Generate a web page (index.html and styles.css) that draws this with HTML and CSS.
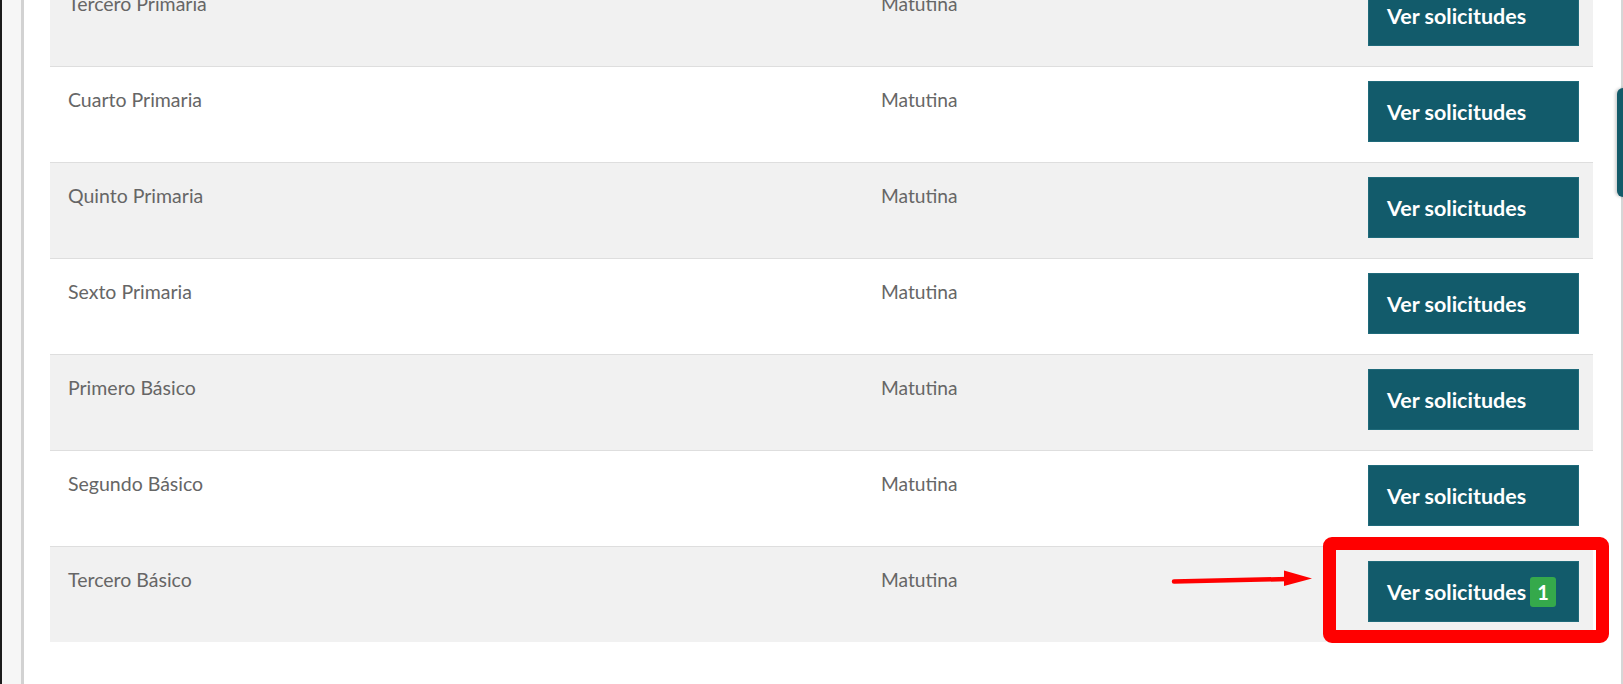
FILE: index.html
```html
<!DOCTYPE html>
<html lang="es">
<head>
<meta charset="utf-8">
<title>Solicitudes por grado</title>
<link rel="stylesheet" href="styles.css">
</head>
<body>
<div class="window">
  <div class="edge"></div>
  <div class="gutter"></div>
  <main class="main">
    <div class="table">
      <div class="row alt">
        <div class="cell grade">Tercero Primaria</div>
        <div class="cell shift">Matutina</div>
        <div class="cell action"><button class="btn">Ver solicitudes</button></div>
      </div>
      <div class="row">
        <div class="cell grade">Cuarto Primaria</div>
        <div class="cell shift">Matutina</div>
        <div class="cell action"><button class="btn">Ver solicitudes</button></div>
      </div>
      <div class="row alt">
        <div class="cell grade">Quinto Primaria</div>
        <div class="cell shift">Matutina</div>
        <div class="cell action"><button class="btn">Ver solicitudes</button></div>
      </div>
      <div class="row">
        <div class="cell grade">Sexto Primaria</div>
        <div class="cell shift">Matutina</div>
        <div class="cell action"><button class="btn">Ver solicitudes</button></div>
      </div>
      <div class="row alt">
        <div class="cell grade">Primero Básico</div>
        <div class="cell shift">Matutina</div>
        <div class="cell action"><button class="btn">Ver solicitudes</button></div>
      </div>
      <div class="row">
        <div class="cell grade">Segundo Básico</div>
        <div class="cell shift">Matutina</div>
        <div class="cell action"><button class="btn">Ver solicitudes</button></div>
      </div>
      <div class="row alt">
        <div class="cell grade">Tercero Básico</div>
        <div class="cell shift">Matutina</div>
        <div class="cell action"><button class="btn">Ver solicitudes <span class="badge">1</span></button></div>
      </div>
    </div>
  </main>
</div>
<div class="side-tab"></div>
<div class="highlight"></div>
<svg class="arrow" width="150" height="24" viewBox="0 0 150 24" aria-hidden="true">
  <line x1="6" y1="14.5" x2="120" y2="12" stroke="#ff0000" stroke-width="4.5" stroke-linecap="round"/>
  <polygon points="116,3.5 144,11.5 116,19" fill="#ff0000"/>
</svg>
</body>
</html>
```
FILE: styles.css
```css
html, body {
  margin: 0;
  padding: 0;
  height: 684px;
  overflow: hidden;
  background: #ffffff;
}
body {
  position: relative;
  font-family: Lato, "Open Sans", "Liberation Sans", sans-serif;
}
.window {
  display: flex;
  height: 684px;
}
.edge {
  width: 2px;
  background: #1c1c1c;
  flex: none;
}
.gutter {
  width: 19px;
  flex: none;
  background: #f6f6f6;
  border-right: 3px solid #d2d2d2;
}
.main {
  flex: 1;
  padding: 0 28px 0 26px;
  border-right: 2px solid #d6d6d6;
  background: #ffffff;
  overflow: hidden;
}
.table {
  margin-top: -30px;
}
.row {
  display: grid;
  grid-template-columns: 813px 1fr auto;
  height: 95px;
  border-top: 1px solid #dedede;
  background: #ffffff;
}
.row.alt {
  background: #f1f1f1;
}
.cell {
  font-size: 19.5px;
  line-height: 26px;
  color: #666666;
}
.grade {
  padding: 20px 18px 0 18px;
}
.shift {
  padding: 20px 18px 0 18px;
  font-size: 19.2px;
}
.action {
  padding: 14px 14px 0 0;
}
.btn {
  width: 211px;
  height: 61px;
  border: 1px solid #1f6a7a;
  background: #125b6b;
  color: #ffffff;
  font-family: Lato, "Open Sans", "Liberation Sans", sans-serif;
  font-size: 21.5px;
  font-weight: 700;
  text-align: left;
  padding: 0 0 0 18px;
  display: flex;
  align-items: center;
  gap: 0;
  cursor: pointer;
}
.badge {
  display: inline-block;
  margin-left: 4px;
  background: #35a94b;
  color: #ffffff;
  font-size: 20px;
  font-weight: 700;
  line-height: 24px;
  padding: 3px 7px;
  border-radius: 3px;
}
.side-tab {
  position: absolute;
  left: 1617px;
  top: 88px;
  width: 12px;
  height: 109px;
  background: #135b6a;
  border-radius: 6px 0 0 6px;
  box-shadow: -2px 0 3px rgba(0, 0, 0, 0.18);
}
.highlight {
  position: absolute;
  left: 1323px;
  top: 537px;
  width: 260px;
  height: 80px;
  border: 13px solid #ff0000;
  border-radius: 9px;
}
.arrow {
  position: absolute;
  left: 1168px;
  top: 567px;
}
```
